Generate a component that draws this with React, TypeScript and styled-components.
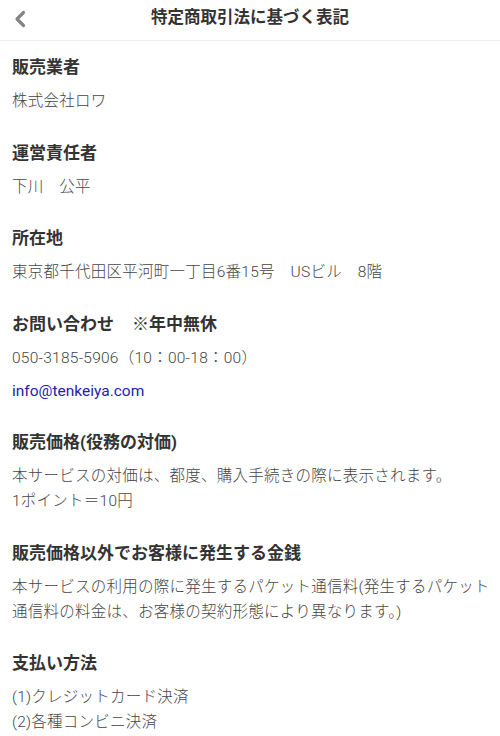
import React from "react";
import styled, { createGlobalStyle } from "styled-components";

const GlobalStyle = createGlobalStyle`
  html, body {
    margin: 0;
    padding: 0;
    background: #ffffff;
  }
  body {
    font-family: Roboto, "Noto Sans CJK JP", "Noto Sans", sans-serif;
    -webkit-font-smoothing: antialiased;
  }
`;

const Page = styled.div`
  width: 100%;
  min-height: 100vh;
  background: #fff;
`;

const Header = styled.header`
  height: 40px;
  display: flex;
  align-items: center;
  justify-content: center;
  position: relative;
  border-bottom: 1px solid #ececec;
`;

const BackButton = styled.button`
  position: absolute;
  left: 9px;
  top: 8px;
  width: 22px;
  height: 22px;
  padding: 0;
  border: none;
  background: transparent;
  display: flex;
  align-items: center;
  justify-content: center;
`;

const Title = styled.h1`
  margin: -4px 0 0;
  font-size: 16.5px;
  font-weight: 700;
  color: #333;
  line-height: 24px;
`;

const Content = styled.main`
  padding: 14px 8px 0 12px;
`;

const Section = styled.section`
  margin-bottom: 26.5px;
`;

const Heading = styled.h2`
  margin: 0 0 10px;
  font-size: 17px;
  font-weight: 700;
  line-height: 24px;
  color: #333;
`;

const Para = styled.p<{ $gap?: boolean }>`
  margin: ${(p) => (p.$gap ? "8px" : "0")} 0 0;
  font-size: 15.5px;
  font-weight: 300;
  letter-spacing: 0.25px;
  line-height: 25px;
  color: #454545;
`;

const Mail = styled.a`
  color: #2323a8;
  text-decoration: none;
  letter-spacing: 0;
  font-weight: 400;
`;

const Note = styled.span`
  margin-left: 18px;
`;

const ChevronLeft = () => (
  <svg width="14" height="18" viewBox="0 0 14 18">
    <path
      d="M10.5 2.5 L4 9 L10.5 15.5"
      fill="none"
      stroke="#858585"
      strokeWidth="3.2"
      strokeLinecap="round"
      strokeLinejoin="round"
    />
  </svg>
);

const App: React.FC = () => (
  <Page>
    <GlobalStyle />
    <Header>
      <BackButton aria-label="戻る">
        <ChevronLeft />
      </BackButton>
      <Title>特定商取引法に基づく表記</Title>
    </Header>
    <Content>
      <Section>
        <Heading>販売業者</Heading>
        <Para>株式会社ロワ</Para>
      </Section>
      <Section>
        <Heading>運営責任者</Heading>
        <Para>下川　公平</Para>
      </Section>
      <Section>
        <Heading>所在地</Heading>
        <Para>東京都千代田区平河町一丁目6番15号　USビル　8階</Para>
      </Section>
      <Section>
        <Heading>
          お問い合わせ<Note>※年中無休</Note>
        </Heading>
        <Para>050-3185-5906（10：00-18：00）</Para>
        <Para $gap>
          <Mail href="mailto:info@tenkeiya.com">info@tenkeiya.com</Mail>
        </Para>
      </Section>
      <Section>
        <Heading>販売価格(役務の対価)</Heading>
        <Para>
          本サービスの対価は、都度、購入手続きの際に表示されます。
          <br />
          1ポイント＝10円
        </Para>
      </Section>
      <Section>
        <Heading>販売価格以外でお客様に発生する金銭</Heading>
        <Para>
          本サービスの利用の際に発生するパケット通信料(発生するパケット通信料の料金は、お客様の契約形態により異なります。)
        </Para>
      </Section>
      <Section>
        <Heading>支払い方法</Heading>
        <Para>
          (1)クレジットカード決済
          <br />
          (2)各種コンビニ決済
        </Para>
      </Section>
    </Content>
  </Page>
);

export default App;
